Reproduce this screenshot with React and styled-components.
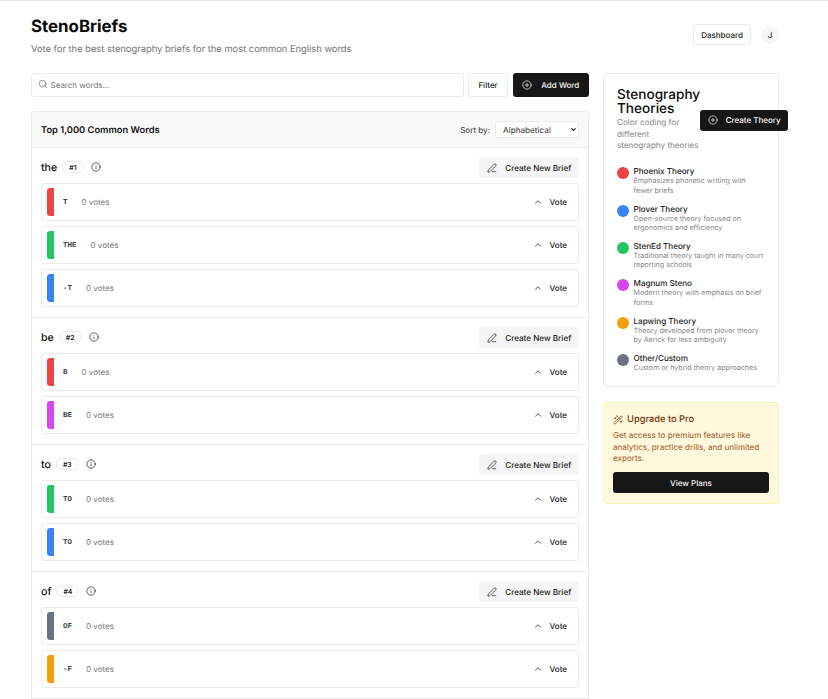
import styled, { createGlobalStyle } from 'styled-components'
import { Search, CirclePlus, Info, PenLine, ChevronUp, ChevronDown, WandSparkles } from 'lucide-react'

const RED = '#ef4444'
const BLUE = '#3b82f6'
const GREEN = '#22c55e'
const PURPLE = '#d946ef'
const ORANGE = '#f59e0b'
const GRAY = '#6b7280'

const words = [
  { word: 'the', rank: 1, briefs: [['T', RED], ['THE', GREEN], ['-T', BLUE]] },
  { word: 'be', rank: 2, briefs: [['B', RED], ['BE', PURPLE]] },
  { word: 'to', rank: 3, briefs: [['TO', GREEN], ['TO', BLUE]] },
  { word: 'of', rank: 4, briefs: [['OF', GRAY], ['-F', ORANGE]] },
]

const theories = [
  { name: 'Phoenix Theory', color: RED, text: 'Emphasizes phonetic writing with fewer briefs' },
  { name: 'Plover Theory', color: BLUE, text: 'Open-source theory focused on ergonomics and efficiency' },
  { name: 'StenEd Theory', color: GREEN, text: 'Traditional theory taught in many court reporting schools' },
  { name: 'Magnum Steno', color: PURPLE, text: 'Modern theory with emphasis on brief forms' },
  { name: 'Lapwing Theory', color: ORANGE, text: 'Theory developed from plover theory by Aerick for less ambiguity' },
  { name: 'Other/Custom', color: GRAY, text: 'Custom or hybrid theory approaches' },
]

const App = () => {
  return (
    <>
      <GlobalStyle />
      <Page>
        <Header>
          <div>
            <Title>StenoBriefs</Title>
            <Subtitle>Vote for the best stenography briefs for the most common English words</Subtitle>
          </div>
          <HeaderActions>
            <OutlineButton>Dashboard</OutlineButton>
            <Avatar>J</Avatar>
          </HeaderActions>
        </Header>
        <Columns>
          <Main>
            <Toolbar>
              <SearchBox>
                <Search size={10} strokeWidth={1.6} color="#666" />
                <SearchInput placeholder="Search words..." />
              </SearchBox>
              <FilterButton>Filter</FilterButton>
              <DarkButton>
                <CirclePlus size={10} strokeWidth={1.7} />
                Add Word
              </DarkButton>
            </Toolbar>
            <Panel>
              <PanelHeader>
                <PanelTitle>Top 1,000 Common Words</PanelTitle>
                <SortWrap>
                  <SortText>Sort by:</SortText>
                  <SelectBox>
                    <SortSelect defaultValue="alpha">
                      <option value="alpha">Alphabetical</option>
                      <option value="rank">Rank</option>
                    </SortSelect>
                    <SelectArrow>
                      <ChevronDown size={7} strokeWidth={3.5} color="#111" />
                    </SelectArrow>
                  </SelectBox>
                </SortWrap>
              </PanelHeader>
              {words.map((w) => (
                <Section key={w.word}>
                  <WordRow>
                    <WordInfo>
                      <Word>{w.word}</Word>
                      <Rank>#{w.rank}</Rank>
                      <Info size={10} strokeWidth={1.6} color="#111" />
                    </WordInfo>
                    <BriefButton>
                      <PenLine size={10} strokeWidth={1.7} />
                      Create New Brief
                    </BriefButton>
                  </WordRow>
                  {w.briefs.map(([code, color], i) => (
                    <BriefRow key={i}>
                      <ColorBar $color={color} />
                      <Code>{code}</Code>
                      <Votes>0 votes</Votes>
                      <VoteButton>
                        <ChevronUp size={10} strokeWidth={2} color="#333" />
                        Vote
                      </VoteButton>
                    </BriefRow>
                  ))}
                </Section>
              ))}
            </Panel>
          </Main>
          <Sidebar>
            <TheoryCard>
              <TheoryHead>
                <div>
                  <TheoryTitle>Stenography Theories</TheoryTitle>
                  <TheoryIntro>Color coding for<br />different<br />stenography theories</TheoryIntro>
                </div>
                <FloatingButton>
                  <CirclePlus size={10} strokeWidth={1.7} />
                  Create Theory
                </FloatingButton>
              </TheoryHead>
              <TheoryList>
                {theories.map((t) => (
                  <TheoryItem key={t.name}>
                    <Dot $color={t.color} />
                    <div>
                      <TheoryName>{t.name}</TheoryName>
                      <TheoryText>{t.text}</TheoryText>
                    </div>
                  </TheoryItem>
                ))}
              </TheoryList>
            </TheoryCard>
            <UpgradeCard>
              <UpgradeTitle>
                <WandSparkles size={10} strokeWidth={1.5} />
                Upgrade to Pro
              </UpgradeTitle>
              <UpgradeText>
                Get access to premium features like analytics, practice drills, and unlimited exports.
              </UpgradeText>
              <PlansButton>View Plans</PlansButton>
            </UpgradeCard>
          </Sidebar>
        </Columns>
      </Page>
    </>
  )
}

const GlobalStyle = createGlobalStyle`
  * { box-sizing: border-box; }
  html, body {
    margin: 0;
    height: 699px;
    overflow: hidden;
    background: #fff;
    font-family: Inter, "Noto Sans", sans-serif;
    color: #111;
    text-rendering: geometricPrecision;
  }
  button, input, select { font-family: inherit; text-rendering: inherit; }
`

const Page = styled.div`
  width: 828px;
  padding: 0 49px 0 31px;
  border-top: 1px solid #e8e8e8;
`

const Header = styled.header`
  display: flex;
  justify-content: space-between;
  height: 72px;
  padding-top: 16px;
`

const Title = styled.h1`
  margin: 0;
  font-size: 16.85px;
  line-height: 20px;
  font-weight: 700;
  color: #0a0a0a;
`

const Subtitle = styled.p`
  margin: 6px 0 0;
  font-size: 9.36px;
  line-height: 13px;
  color: #737373;
`

const HeaderActions = styled.div`
  display: flex;
  align-items: center;
  gap: 10px;
  height: 21px;
  margin-top: 7px;
`

const OutlineButton = styled.button`
  width: 58px;
  height: 21px;
  padding: 0;
  background: #fff;
  border: 1px solid #ebebeb;
  border-radius: 3px;
  font-size: 8px;
  font-weight: 500;
  color: #222;
`

const Avatar = styled.div`
  display: flex;
  align-items: center;
  justify-content: center;
  width: 18px;
  height: 18px;
  border-radius: 50%;
  background: #f5f5f5;
  font-size: 8px;
  font-weight: 500;
  color: #333;
`

const Columns = styled.div`
  display: flex;
  align-items: flex-start;
  gap: 14px;
`

const Main = styled.main`
  width: 558px;
  flex-shrink: 0;
`

const Toolbar = styled.div`
  display: flex;
  gap: 4.7px;
  height: 24px;
  margin-bottom: 14px;
`

const SearchBox = styled.div`
  display: flex;
  align-items: center;
  gap: 3px;
  flex: 1;
  padding-left: 5.5px;
  border: 1px solid #ebebeb;
  border-radius: 3px;
  svg { margin-top: -3px; }
`

const SearchInput = styled.input`
  flex: 1;
  min-width: 0;
  padding: 0;
  border: 0;
  outline: 0;
  background: transparent;
  font-size: 8px;
  &::placeholder { color: #777; }
`

const FilterButton = styled(OutlineButton)`
  width: 39.5px;
  height: 24px;
`

const DarkButton = styled.button`
  display: flex;
  align-items: center;
  justify-content: center;
  gap: 9px;
  width: 76.5px;
  padding: 0;
  background: #171717;
  color: #fafafa;
  border: 0;
  border-radius: 3px;
  font-size: 8px;
  font-weight: 500;
`

const Panel = styled.section`
  border: 1px solid #ebebeb;
  border-radius: 3px 3px 0 0;
`

const PanelHeader = styled.div`
  display: flex;
  align-items: center;
  justify-content: space-between;
  height: 36px;
  padding: 0 9px;
  background: #f9f9f9;
  border-bottom: 1px solid #ebebeb;
`

const PanelTitle = styled.h2`
  margin: 1px 0 0;
  font-size: 9.3px;
  font-weight: 600;
  color: #111;
`

const SortWrap = styled.label`
  display: flex;
  align-items: center;
  gap: 5px;
`

const SortText = styled.span`
  font-size: 8.1px;
  color: #333;
`

const SelectBox = styled.span`
  position: relative;
  display: block;
  width: 84px;
  height: 17px;
`

const SortSelect = styled.select`
  appearance: none;
  display: block;
  width: 100%;
  height: 100%;
  padding: 0 0 0 7px;
  background: #fff;
  border: 1px solid #ebebeb;
  border-radius: 2px;
  font-size: 8.2px;
  color: #333;
`

const SelectArrow = styled.span`
  position: absolute;
  top: 5px;
  right: 2px;
  display: flex;
`

const Section = styled.div`
  display: flex;
  flex-direction: column;
  gap: 5px;
  padding: 9px 9px 10px;
  border-bottom: 1px solid #ebebeb;
`

const WordRow = styled.div`
  display: flex;
  align-items: center;
  justify-content: space-between;
  height: 21px;
`

const WordInfo = styled.div`
  display: flex;
  align-items: center;
  gap: 5px;
  margin-top: -1px;
`

const Word = styled.span`
  font-size: 10.6px;
  font-weight: 500;
  color: #111;
`

const Rank = styled.span`
  display: flex;
  align-items: center;
  height: 12px;
  padding: 0 6px;
  margin-right: 2px;
  border: 1px solid #ebebeb;
  border-radius: 6px;
  font-size: 6.9px;
  font-weight: 600;
  color: #222;
`

const BriefButton = styled.button`
  display: flex;
  align-items: center;
  justify-content: center;
  gap: 8.5px;
  width: 100px;
  height: 21px;
  padding: 0;
  background: #f5f5f5;
  border: 0;
  border-radius: 3px;
  font-size: 8.1px;
  font-weight: 500;
  color: #222;
`

const BriefRow = styled.div`
  display: flex;
  align-items: center;
  height: 38px;
  padding: 0 11px 0 5px;
  border: 1px solid #ebebeb;
  border-radius: 3px;
`

const ColorBar = styled.span`
  width: 7px;
  height: 28px;
  margin-right: 9px;
  border-radius: 3px 0 0 3px;
  background: ${(p) => p.$color};
`

const Code = styled.code`
  margin: 2px 14px 0 0;
  font-family: "Liberation Mono", monospace;
  font-size: 7.5px;
  font-weight: 700;
  color: #444;
`

const Votes = styled.span`
  flex: 1;
  font-size: 8px;
  color: #777;
`

const VoteButton = styled.button`
  display: flex;
  align-items: center;
  gap: 6.5px;
  padding: 0;
  background: transparent;
  border: 0;
  font-size: 8px;
  font-weight: 500;
  color: #222;
`

const Sidebar = styled.aside`
  display: flex;
  flex-direction: column;
  gap: 15px;
  width: 176px;
  flex-shrink: 0;
`

const TheoryCard = styled.div`
  height: 314px;
  padding: 14px 13px;
  border: 1px solid #ebebeb;
  border-radius: 4px;
`

const TheoryHead = styled.div`
  display: flex;
  align-items: center;
  justify-content: space-between;
  margin-bottom: 14px;
`

const TheoryTitle = styled.h3`
  margin: 0;
  font-size: 13.6px;
  line-height: 14px;
  font-weight: 500;
  color: #0a0a0a;
`

const TheoryIntro = styled.p`
  margin: 1px 0 0;
  font-size: 8.15px;
  line-height: 11.7px;
  color: #888;
  white-space: nowrap;
`

const FloatingButton = styled(DarkButton)`
  flex-shrink: 0;
  width: 88px;
  height: 21px;
  gap: 8px;
`

const TheoryList = styled.div`
  display: flex;
  flex-direction: column;
  gap: 8.6px;
`

const TheoryItem = styled.div`
  display: flex;
  gap: 4.5px;
`

const Dot = styled.span`
  flex-shrink: 0;
  width: 12px;
  height: 12px;
  margin-top: 1px;
  border-radius: 50%;
  background: ${(p) => p.$color};
`

const TheoryName = styled.div`
  font-size: 8.1px;
  line-height: 10px;
  font-weight: 500;
  color: #222;
`

const TheoryText = styled.div`
  font-size: 7.1px;
  line-height: 9.4px;
  color: #888;
`

const UpgradeCard = styled.div`
  height: 102px;
  padding: 10px 9px;
  background: #fef8dc;
  border: 1px solid #fdf0b5;
  border-radius: 4px;
`

const UpgradeTitle = styled.div`
  display: flex;
  align-items: center;
  gap: 4px;
  font-size: 9.3px;
  line-height: 13px;
  font-weight: 500;
  color: #78350f;
`

const UpgradeText = styled.p`
  margin: 4px 0 7px;
  font-size: 8.1px;
  line-height: 11.7px;
  color: #a3562a;
`

const PlansButton = styled(DarkButton)`
  width: 100%;
  height: 21px;
`

export default App
